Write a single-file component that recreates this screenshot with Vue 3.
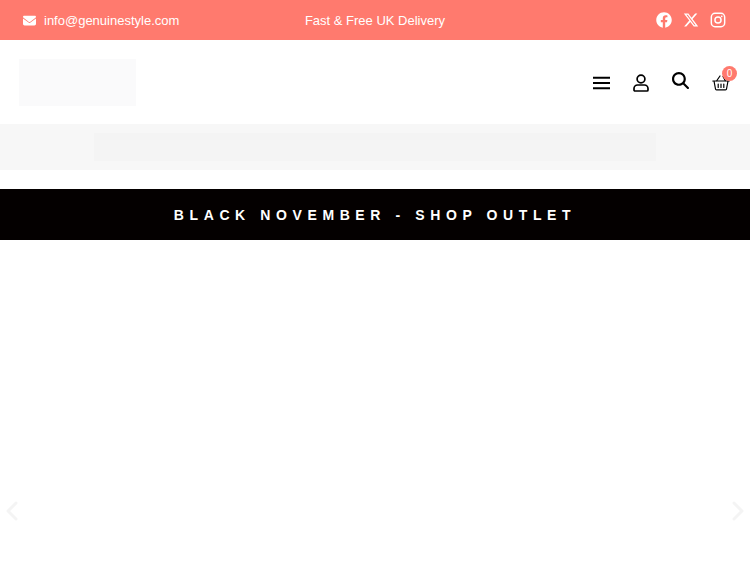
<script setup>
const socials = ["facebook", "x", "instagram"];
</script>

<template>
  <div class="page">
    <div class="topbar">
      <div class="mail">
        <svg class="mail-icon" viewBox="0 0 512 512" fill="#fff">
          <path d="M48 64C21.5 64 0 85.5 0 112c0 15.100 7.100 29.300 19.200 38.400L236.800 313.600c11.400 8.500 27 8.500 38.400 0L492.800 150.400c12.100-9.100 19.200-23.300 19.200-38.400 0-26.500-21.500-48-48-48H48zM0 176V384c0 35.300 28.700 64 64 64H448c35.300 0 64-28.700 64-64V176L294.400 339.200c-22.800 17.100-54 17.100-76.800 0L0 176z" />
        </svg>
        <span>info@genuinestyle.com</span>
      </div>
      <div class="delivery">Fast &amp; Free UK Delivery</div>
      <div class="socials">
        <template v-for="s in socials" :key="s">
          <svg v-if="s === 'facebook'" class="social" viewBox="0 0 512 512" fill="#fff">
            <path d="M504 256C504 119 393 8 256 8S8 119 8 256c0 123.780 90.690 226.380 209.250 245V327.690h-63V256h63v-54.640c0-62.150 37-96.480 93.670-96.480 27.140 0 55.520 4.840 55.520 4.840v61h-31.280c-30.800 0-40.410 19.120-40.410 38.730V256h68.780l-11 71.690h-57.780V501C413.310 482.380 504 379.780 504 256z" />
          </svg>
          <svg v-else-if="s === 'x'" class="social" viewBox="0 0 512 512" fill="#fff">
            <path d="M389.200 48h70.600L305.600 224.200 487 464H345L233.700 318.600 106.500 464H35.800L200.700 275.500 26.800 48H172.400L272.900 180.900 389.200 48zM364.400 421.800h39.100L151.100 88h-42L364.400 421.800z" />
          </svg>
          <svg v-else class="social" viewBox="0 0 24 24" fill="none" stroke="#fff" stroke-width="2.200">
            <rect x="2" y="2" width="20" height="20" rx="5.500" />
            <circle cx="12" cy="12" r="4.600" />
            <circle cx="17.600" cy="6.400" r="1.300" fill="#fff" stroke="none" />
          </svg>
        </template>
      </div>
    </div>

    <header class="header">
      <div class="logo"></div>
      <div class="actions">
        <svg class="burger" viewBox="0 0 18 14" fill="none" stroke="#000" stroke-width="2">
          <path d="M0 1.500h18M0 7h18M0 12.500h18" />
        </svg>
        <svg class="user" viewBox="0 0 16 18" fill="none" stroke="#000" stroke-width="1.700">
          <circle cx="8" cy="5" r="3.900" />
          <path d="M4.500 11h7a3.500 3.500 0 0 1 3.500 3.500V16a1 1 0 0 1-1 1H2a1 1 0 0 1-1-1v-1.500A3.500 3.500 0 0 1 4.500 11z" />
        </svg>
        <svg class="search" viewBox="0 0 512 512" fill="#000">
          <path d="M416 208c0 45.900-14.900 88.300-40 122.700L502.600 457.400c12.500 12.500 12.500 32.800 0 45.300s-32.800 12.500-45.300 0L330.700 376c-34.400 25.200-76.800 40-122.700 40C93.100 416 0 322.900 0 208S93.100 0 208 0S416 93.100 416 208zM208 352a144 144 0 1 0 0-288 144 144 0 1 0 0 288z" />
        </svg>
        <div class="cart">
          <svg class="basket" viewBox="0 0 18 16" fill="none" stroke="#000" stroke-width="1.200" stroke-linejoin="round" stroke-linecap="round">
            <path d="M.8 6h16.400M2 6l1.500 8a1 1 0 0 0 1 .9h9a1 1 0 0 0 1-.9L16 6M4.500 6 8 1M13.500 6 11 1.500M6.200 9v3.500M9 9v3.500M11.800 9v3.500" />
          </svg>
          <span class="count">0</span>
        </div>
      </div>
    </header>

    <div class="strip">
      <div class="strip-inner"></div>
    </div>

    <div class="promo">BLACK NOVEMBER - SHOP OUTLET</div>

    <section class="hero">
      <svg class="arrow prev" viewBox="0 0 12 20" fill="none" stroke="#f4f4f4" stroke-width="3" stroke-linecap="round" stroke-linejoin="round">
        <path d="M10 2 2 10l8 8" />
      </svg>
      <svg class="arrow next" viewBox="0 0 12 20" fill="none" stroke="#f4f4f4" stroke-width="3" stroke-linecap="round" stroke-linejoin="round">
        <path d="m2 2 8 8-8 8" />
      </svg>
    </section>
  </div>
</template>

<style scoped>
.page {
  height: 563px;
  display: flex;
  flex-direction: column;
  overflow: hidden;
  background: #fff;
  font-family: "Liberation Sans", Arial, sans-serif;
}
.topbar {
  height: 40px;
  flex: none;
  display: grid;
  grid-template-columns: 1fr 1fr 1fr;
  align-items: center;
  padding: 0 23px;
  box-sizing: border-box;
  background: #ff7a6e;
  color: #fff;
  font-size: 13px;
}
.mail {
  display: flex;
  align-items: center;
  gap: 8px;
}
.mail-icon {
  width: 13px;
  height: 13px;
}
.delivery {
  text-align: center;
  white-space: nowrap;
}
.socials {
  display: flex;
  justify-content: flex-end;
  gap: 11px;
  padding-right: 1px;
}
.social {
  width: 16px;
  height: 16px;
}
.header {
  height: 84px;
  flex: none;
  display: flex;
  align-items: center;
  justify-content: space-between;
  padding: 0 20px 0 19px;
}
.logo {
  width: 117px;
  height: 47px;
  background: #fafafb;
}
.actions {
  display: flex;
  align-items: center;
  gap: 23px;
  margin-top: 2px;
}
.burger {
  width: 17px;
  height: 14px;
}
.user {
  width: 16px;
  height: 18px;
}
.search {
  width: 17px;
  height: 17px;
  margin-top: -6px;
}
.cart {
  position: relative;
  width: 18px;
  height: 16px;
  margin-top: -1px;
}
.basket {
  display: block;
  width: 18px;
  height: 16px;
}
.count {
  position: absolute;
  top: -9px;
  right: -7px;
  width: 15px;
  height: 15px;
  border-radius: 50%;
  background: #ff7a6e;
  color: #fff;
  font-size: 10px;
  line-height: 15px;
  text-align: center;
}
.strip {
  height: 46px;
  flex: none;
  display: flex;
  justify-content: center;
  align-items: center;
  background: #f7f7f7;
}
.strip-inner {
  width: 562px;
  height: 28px;
  background: #f4f4f4;
}
.promo {
  height: 51px;
  flex: none;
  margin-top: 19px;
  display: flex;
  align-items: center;
  justify-content: center;
  background: #040000;
  color: #fff;
  font-size: 14px;
  font-weight: 700;
  letter-spacing: 5.600px;
  white-space: nowrap;
}
.hero {
  position: relative;
  flex: 1;
}
.arrow {
  position: absolute;
  top: 261px;
  width: 12px;
  height: 20px;
}
.prev {
  left: 6px;
}
.next {
  right: 6px;
}
</style>
